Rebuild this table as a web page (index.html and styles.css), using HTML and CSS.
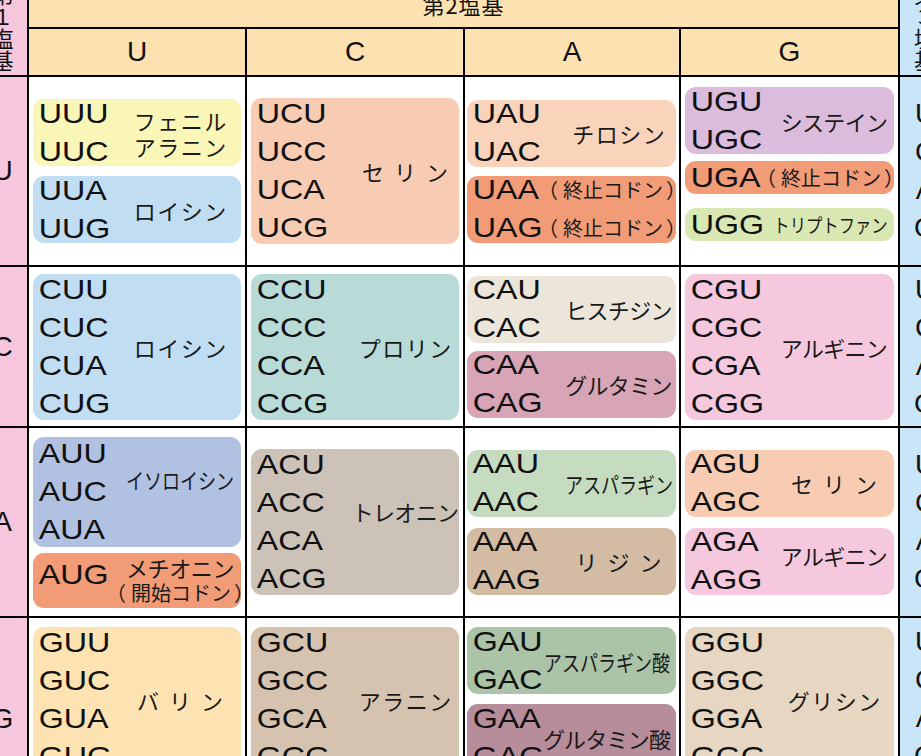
FILE: index.html
```html
<!DOCTYPE html>
<html lang="ja">
<head>
<meta charset="utf-8">
<title>遺伝暗号表</title>
<link rel="stylesheet" href="styles.css">
</head>
<body>
<div class="table">
  <div class="head-side side-l"><span class="vtext">第１塩基</span></div>
  <div class="h1">第2塩基</div>
  <div class="head-side side-r"><span class="vtext">第３塩基</span></div>
  <div class="h2">U</div>
  <div class="h2">C</div>
  <div class="h2">A</div>
  <div class="h2">G</div>

  <!-- 第1塩基 U -->
  <div class="base">U</div>
  <div class="cell c-u gap10">
    <div class="box b2 phe">
      <div class="codons"><div>UUU</div><div>UUC</div></div>
      <div class="name"><span class="ls4">フェニル</span><span class="ls4">アラニン</span></div>
    </div>
    <div class="box b2 leu">
      <div class="codons"><div>UUA</div><div>UUG</div></div>
      <div class="name"><span class="ls4">ロイシン</span></div>
    </div>
  </div>
  <div class="cell c-c">
    <div class="box b4 ser">
      <div class="codons"><div>UCU</div><div>UCC</div><div>UCA</div><div>UCG</div></div>
      <div class="name"><span class="wide">セリン</span></div>
    </div>
  </div>
  <div class="cell c-a">
    <div class="box b2 tyr">
      <div class="codons"><div>UAU</div><div>UAC</div></div>
      <div class="name"><span class="ls4">チロシン</span></div>
    </div>
    <div class="box b2 stop">
      <div class="codons"><div>UAA</div><div>UAG</div></div>
      <div class="name left">
        <span class="paren"><span class="pl">（</span>終止コドン<span class="pr">）</span></span>
        <span class="paren"><span class="pl">（</span>終止コドン<span class="pr">）</span></span>
      </div>
    </div>
  </div>
  <div class="cell c-g top ug">
    <div class="box b2 cys">
      <div class="codons"><div>UGU</div><div>UGC</div></div>
      <div class="name"><span class="ls5">システイン</span></div>
    </div>
    <div class="box bs stop">
      <div class="codons"><div>UGA</div></div>
      <div class="name left">
        <span class="paren"><span class="pl">（</span>終止コドン<span class="pr">）</span></span>
      </div>
    </div>
    <div class="box bs trp">
      <div class="codons"><div>UGG</div></div>
      <div class="name"><span class="sm">トリプトファン</span></div>
    </div>
  </div>
  <div class="thirds"><div>U</div><div>C</div><div>A</div><div>G</div></div>

  <!-- 第1塩基 C -->
  <div class="base">C</div>
  <div class="cell c-u">
    <div class="box b4 leu">
      <div class="codons"><div>CUU</div><div>CUC</div><div>CUA</div><div>CUG</div></div>
      <div class="name"><span class="ls4">ロイシン</span></div>
    </div>
  </div>
  <div class="cell c-c">
    <div class="box b4 pro">
      <div class="codons"><div>CCU</div><div>CCC</div><div>CCA</div><div>CCG</div></div>
      <div class="name"><span class="ls4">プロリン</span></div>
    </div>
  </div>
  <div class="cell c-a gap8">
    <div class="box b2 his">
      <div class="codons"><div>CAU</div><div>CAC</div></div>
      <div class="name"><span class="ls5">ヒスチジン</span></div>
    </div>
    <div class="box b2 gln">
      <div class="codons"><div>CAA</div><div>CAG</div></div>
      <div class="name"><span class="ls5">グルタミン</span></div>
    </div>
  </div>
  <div class="cell c-g">
    <div class="box b4 arg">
      <div class="codons"><div>CGU</div><div>CGC</div><div>CGA</div><div>CGG</div></div>
      <div class="name"><span class="ls5">アルギニン</span></div>
    </div>
  </div>
  <div class="thirds"><div>U</div><div>C</div><div>A</div><div>G</div></div>

  <!-- 第1塩基 A -->
  <div class="base">A</div>
  <div class="cell c-u gap6">
    <div class="box b3 ile">
      <div class="codons"><div>AUU</div><div>AUC</div><div>AUA</div></div>
      <div class="name raise13"><span class="sq">イソロイシン</span></div>
    </div>
    <div class="box b1 met">
      <div class="codons"><div>AUG</div></div>
      <div class="name">
        <span class="ls-met">メチオニン</span>
        <span class="paren"><span class="pl">（</span>開始コドン<span class="pr">）</span></span>
      </div>
    </div>
  </div>
  <div class="cell c-c">
    <div class="box b4 thr">
      <div class="codons"><div>ACU</div><div>ACC</div><div>ACA</div><div>ACG</div></div>
      <div class="name raise11"><span class="ls5">トレオニン</span></div>
    </div>
  </div>
  <div class="cell c-a gap11">
    <div class="box b2 asn">
      <div class="codons"><div>AAU</div><div>AAC</div></div>
      <div class="name"><span class="sq">アスパラギン</span></div>
    </div>
    <div class="box b2 lys">
      <div class="codons"><div>AAA</div><div>AAG</div></div>
      <div class="name"><span class="wide">リジン</span></div>
    </div>
  </div>
  <div class="cell c-g gap11">
    <div class="box b2 ser">
      <div class="codons"><div>AGU</div><div>AGC</div></div>
      <div class="name"><span class="wide">セリン</span></div>
    </div>
    <div class="box b2 arg">
      <div class="codons"><div>AGA</div><div>AGG</div></div>
      <div class="name raise6"><span class="ls5">アルギニン</span></div>
    </div>
  </div>
  <div class="thirds"><div>U</div><div>C</div><div>A</div><div>G</div></div>

  <!-- 第1塩基 G -->
  <div class="base">G</div>
  <div class="cell c-u top">
    <div class="box b4 val">
      <div class="codons"><div>GUU</div><div>GUC</div><div>GUA</div><div>GUG</div></div>
      <div class="name"><span class="wide">バリン</span></div>
    </div>
  </div>
  <div class="cell c-c top">
    <div class="box b4 ala">
      <div class="codons"><div>GCU</div><div>GCC</div><div>GCA</div><div>GCG</div></div>
      <div class="name"><span class="ls4">アラニン</span></div>
    </div>
  </div>
  <div class="cell c-a top gap10">
    <div class="box b2 asp acid">
      <div class="codons"><div>GAU</div><div>GAC</div></div>
      <div class="name"><span class="sq">アスパラギン酸</span></div>
    </div>
    <div class="box b2 glu acid">
      <div class="codons"><div>GAA</div><div>GAG</div></div>
      <div class="name"><span class="ls6">グルタミン酸</span></div>
    </div>
  </div>
  <div class="cell c-g top">
    <div class="box b4 gly">
      <div class="codons"><div>GGU</div><div>GGC</div><div>GGA</div><div>GGG</div></div>
      <div class="name"><span class="ls4">グリシン</span></div>
    </div>
  </div>
  <div class="thirds thirds-top"><div>U</div><div>C</div><div>A</div><div>G</div></div>
</div>
</body>
</html>
```

FILE: styles.css
```css
* {
  box-sizing: border-box;
  margin: 0;
  padding: 0;
}

html,
body {
  background: #fff;
}

body {
  width: 921px;
  height: 756px;
  overflow: hidden;
  font-family: "Liberation Sans", "Noto Sans CJK JP", sans-serif;
  color: #111;
}

.table {
  display: grid;
  grid-template-columns: 49px 216px 216px 214px 217px 50px;
  grid-template-rows: 47px 46px 188px 159px 188px 202px;
  gap: 2px;
  width: 972px;
  margin: -20px 0 0 -22px;
  background: #000;
}

/* header */
.head-side {
  grid-row: 1 / span 2;
  display: flex;
  align-items: center;
  justify-content: center;
}

.side-l {
  grid-column: 1;
  background: #f6c7dc;
}

.side-r {
  grid-column: 6;
  background: #c9e6f8;
}

.vtext {
  writing-mode: vertical-rl;
  text-orientation: upright;
  font-family: "Noto Sans CJK JP", sans-serif;
  font-size: 22px;
  line-height: 1;
}

.h1 {
  grid-column: 2 / span 4;
  grid-row: 1;
  display: flex;
  align-items: center;
  justify-content: center;
  background: #fde2b1;
  font-family: "Noto Sans CJK JP", sans-serif;
  font-size: 22px;
  letter-spacing: 1px;
}

.h2 {
  display: flex;
  align-items: center;
  justify-content: center;
  background: #fde2b1;
  font-size: 28px;
}

/* first / third base columns */
.base {
  display: flex;
  align-items: center;
  justify-content: center;
  background: #f6c7dc;
  font-size: 28px;
}

.thirds {
  display: flex;
  flex-direction: column;
  align-items: center;
  justify-content: center;
  background: #c9e6f8;
  font-size: 28px;
  line-height: 38px;
}

.thirds-top {
  justify-content: flex-start;
  padding-top: 5px;
}

/* codon cells */
.cell {
  display: flex;
  flex-direction: column;
  justify-content: center;
  gap: 9px;
  padding: 0 4px;
  background: #fff;
}

.c-u { --cw: 90px; }
.c-c { --cw: 104px; }
.c-a { --cw: 98px; padding: 0 3px 0 2px; }
.c-g { --cw: 93px; }

.gap6 { gap: 6px; }
.gap8 { gap: 8px; }
.gap10 { gap: 10px; }
.gap11 { gap: 11px; }

.top {
  justify-content: flex-start;
  padding-top: 9px;
}

.ug {
  padding-top: 10px;
  gap: 7px;
}

.box {
  flex: none;
  display: flex;
  align-items: center;
  border-radius: 11px;
}

.b1 { height: 55px; }
.b2 { height: 67px; }
.b3 { height: 110px; }
.b4 { height: 146px; }
.bs { height: 33px; }

.codons {
  flex: none;
  width: var(--cw);
  padding-left: 5px;
  font-size: 28px;
  line-height: 38px;
  white-space: nowrap;
  transform: scaleX(1.15);
  transform-origin: 0 50%;
}

.name {
  flex: 1 1 0;
  min-width: 0;
  display: flex;
  flex-direction: column;
  align-items: center;
  justify-content: center;
  padding-right: 4px;
  font-family: "Noto Sans CJK JP", sans-serif;
  font-size: 22px;
  line-height: 26px;
  white-space: nowrap;
  color: #1a1a1a;
}

.name.left {
  align-items: flex-start;
  line-height: 38px;
}

.ls4 { letter-spacing: 1.5px; margin-right: -1.5px; }
.ls5 { letter-spacing: -0.7px; }
.ls6 { letter-spacing: -0.8px; }
.ls-met { letter-spacing: -0.4px; }

.wide {
  letter-spacing: 10px;
  margin-right: -10px;
}

.sq {
  display: block;
  transform: scaleX(0.82);
}

.paren {
  display: block;
  font-size: 20px;
}

.pl { margin-right: 5px; }
.pr { margin-left: 3px; }

.sm {
  display: block;
  font-size: 19px;
  transform: scaleX(0.86);
}

.raise13 { margin-bottom: 26px; }
.raise11 { margin-bottom: 22px; }
.raise6 { margin-bottom: 12px; }

/* special layouts */
.stop .codons { width: 71px; }
.trp { margin-top: 7px; }
.trp .codons { width: 85px; }
.acid .codons { width: 74px; }
.met .codons { margin-bottom: 10px; }

/* amino acid colours */
.phe { background: #faf6b8; }
.leu { background: #c1ddf1; }
.ser { background: #f8ccb3; }
.tyr { background: #f9d3ba; }
.stop { background: #f29b77; }
.cys { background: #dcbcdc; }
.trp { background: #d9e8b3; }
.pro { background: #b8dbd8; }
.his { background: #ebe5da; }
.gln { background: #d7a5b6; }
.arg { background: #f6c8dd; }
.ile { background: #b1c1e2; }
.met { background: #f29b77; }
.thr { background: #cdc2b8; }
.asn { background: #c5dcc1; }
.lys { background: #d3bca3; }
.val { background: #fde3b2; }
.ala { background: #d6c3af; }
.asp { background: #abc3a7; }
.glu { background: #b78c9b; }
.gly { background: #e6d6c2; }
```
